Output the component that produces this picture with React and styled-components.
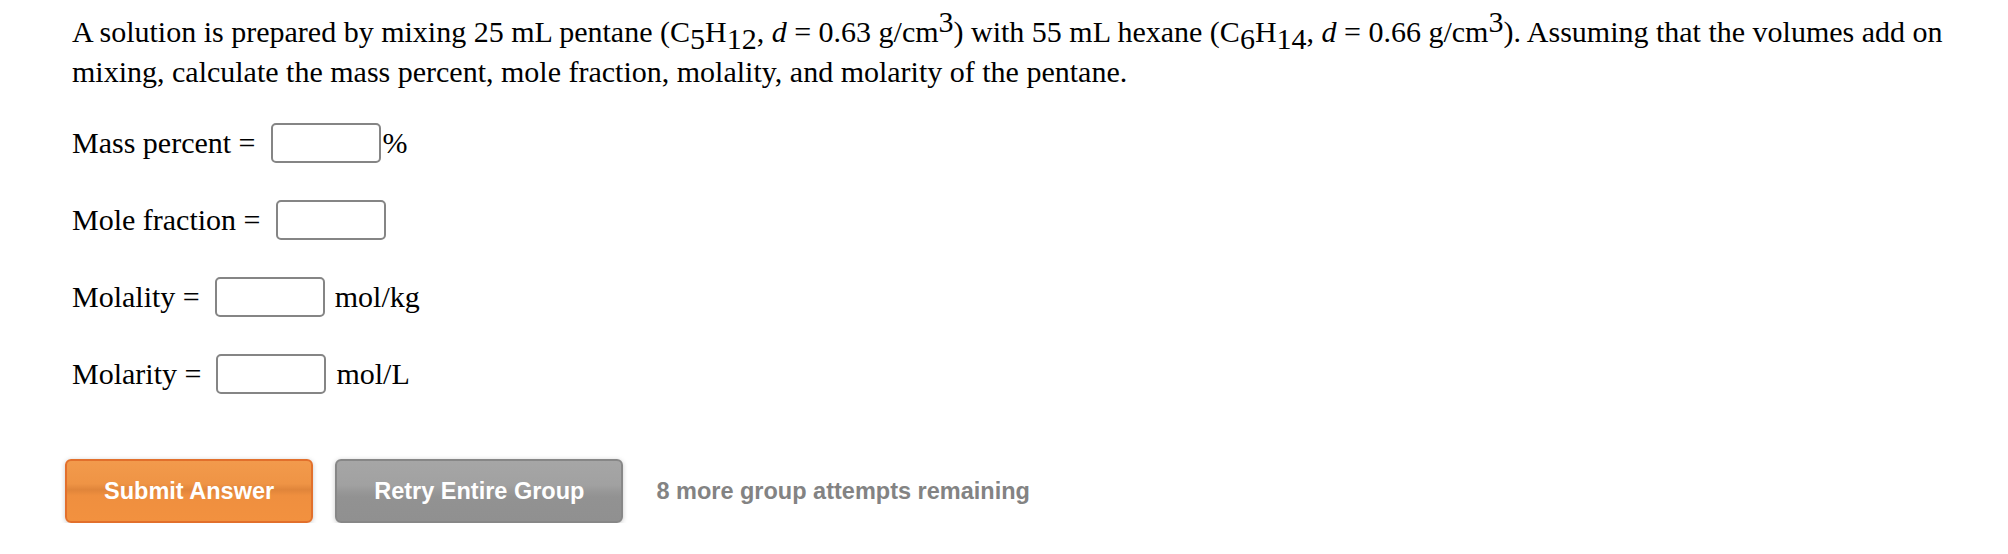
import React from 'react';
import styled, { createGlobalStyle } from 'styled-components';

const GlobalStyle = createGlobalStyle`
  html, body {
    margin: 0;
    padding: 0;
    background: #ffffff;
  }
`;

const Page = styled.div`
  padding: 12px 0 0 72px;
  width: 1900px;
  font-family: "Liberation Serif", "Times New Roman", serif;
  color: #000;
`;

const Question = styled.p`
  margin: 0;
  font-size: 30px;
  line-height: 40px;
`;

const Sub = styled.sub`
  font-size: 1em;
  line-height: 0;
  vertical-align: -7px;
`;

const Sup = styled.sup`
  font-size: 1em;
  line-height: 0;
  vertical-align: 10px;
`;

const Var = styled.i`
  font-style: italic;
`;

const Form = styled.div`
  display: flex;
  flex-direction: column;
  gap: 37px;
  margin-top: 31px;
`;

const Row = styled.div`
  display: flex;
  align-items: center;
  height: 40px;
  font-size: 30px;
`;

const Input = styled.input`
  box-sizing: border-box;
  width: 110px;
  height: 40px;
  margin-left: 15px;
  border: 2px solid #858585;
  border-radius: 5px;
  background: #fff;
  outline: none;
`;

const Unit = styled.span`
  margin-left: ${(p) => p.$gap}px;
`;

const Actions = styled.div`
  display: flex;
  align-items: center;
  margin: 65px 0 0 -7px;
  font-family: "Liberation Sans", Arial, Helvetica, sans-serif;
`;

const Button = styled.button`
  box-sizing: border-box;
  height: 64px;
  padding: 0 37px;
  margin-right: ${(p) => p.$gap}px;
  border-radius: 6px;
  border: 2px solid ${(p) => (p.$primary ? '#e2702c' : '#878787')};
  background: ${(p) =>
    p.$primary
      ? 'linear-gradient(#f29a4c 0%, #ef9445 38%, #e0853a 48%, #ef8f3f 58%, #f2913f 100%)'
      : 'linear-gradient(#a6a6a6 0%, #a1a1a1 40%, #989898 50%, #929292 60%, #909090 100%)'};
  box-shadow: 0 1px 5px rgba(0, 0, 0, 0.22);
  color: #fff;
  font-family: inherit;
  font-weight: bold;
  font-size: 23.5px;
  cursor: pointer;
`;

const Attempts = styled.span`
  margin-left: 11px;
  color: #838383;
  font-weight: bold;
  font-size: 23.5px;
`;

const rows = [
  { label: 'Mass percent =', unit: '%', gap: 2 },
  { label: 'Mole fraction =', unit: '', gap: 0 },
  { label: 'Molality =', unit: 'mol/kg', gap: 10 },
  { label: 'Molarity =', unit: 'mol/L', gap: 10 },
];

export default function App() {
  return (
    <>
      <GlobalStyle />
      <Page>
        <Question>
          A solution is prepared by mixing 25 mL pentane (C<Sub>5</Sub>H<Sub>12</Sub>, <Var>d</Var> = 0.63 g/cm<Sup>3</Sup>) with 55 mL
          hexane (C<Sub>6</Sub>H<Sub>14</Sub>, <Var>d</Var> = 0.66 g/cm<Sup>3</Sup>). Assuming that the volumes add on mixing,
          calculate the mass percent, mole fraction, molality, and molarity of the pentane.
        </Question>
        <Form>
          {rows.map((r) => (
            <Row key={r.label}>
              <span>{r.label}</span>
              <Input type="text" />
              {r.unit && <Unit $gap={r.gap}>{r.unit}</Unit>}
            </Row>
          ))}
        </Form>
        <Actions>
          <Button $primary $gap={22}>Submit Answer</Button>
          <Button $gap={22}>Retry Entire Group</Button>
          <Attempts>8 more group attempts remaining</Attempts>
        </Actions>
      </Page>
    </>
  );
}
